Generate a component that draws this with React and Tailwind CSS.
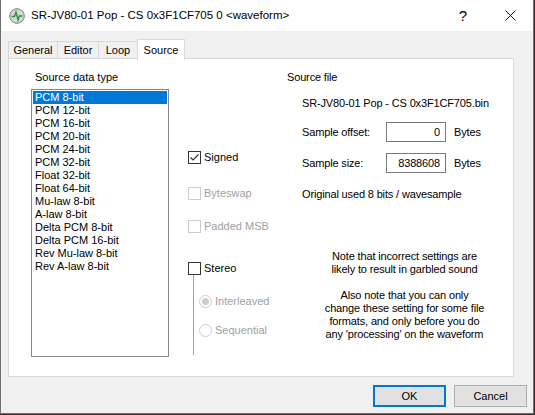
import React from "react";

const items = [
    "PCM 8-bit", "PCM 12-bit", "PCM 16-bit", "PCM 20-bit", "PCM 24-bit", "PCM 32-bit",
    "Float 32-bit", "Float 64-bit", "Mu-law 8-bit", "A-law 8-bit", "Delta PCM 8-bit",
    "Delta PCM 16-bit", "Rev Mu-law 8-bit", "Rev A-law 8-bit",
];

const Check = ({checked, disabled, label}) => (
    <div className="flex items-center h-[13px]">
        <div className={`w-[13px] h-[13px] border bg-white flex items-center justify-center ${disabled ? "border-[#cccccc]" : "border-[#333333]"}`}>
            {checked && (
                <svg width="11" height="11" viewBox="0 0 11 11">
                    <path d="M1.5 5.5 L4 8 L9.5 2.5" fill="none" stroke="#333" strokeWidth="1.2"/>
                </svg>
            )}
        </div>
        <span className={`ml-[3px] ${disabled ? "text-[#a0a0a0]" : "text-black"}`}>{label}</span>
    </div>
);

const Radio = ({checked, label}) => (
    <div className="flex items-center h-[13px]">
        <div className="w-[13px] h-[13px] rounded-full border border-[#cccccc] bg-white flex items-center justify-center">
            {checked && <div className="w-[7px] h-[7px] rounded-full bg-[#cccccc]"/>}
        </div>
        <span className="ml-[3px] text-[#a0a0a0]">{label}</span>
    </div>
);

export default function App() {
    return (
        <div className="w-[535px] h-[415px] bg-[#3a2a2a] overflow-hidden"
             style={{fontFamily: '"Liberation Sans", Arial, sans-serif'}}>
            <div className="w-[534px] h-[414px] border-l border-r border-b border-[#6f6f6f] bg-[#f0f0f0] flex flex-col text-[11px] leading-[13px] text-black">
                {/* title bar */}
                <div className="h-[31px] bg-white flex items-center shrink-0">
                    <svg className="ml-[8px]" width="16" height="16" viewBox="0 0 16 16">
                        <circle cx="8" cy="8" r="7.3" fill="#d6d6d6" stroke="#7d7d7d" strokeWidth="1"/>
                        <path d="M2.5 8.5 H5.5 L7 4 L9 12 L10.3 8 H13.5" fill="none" stroke="#1f9a3a" strokeWidth="1.4"/>
                    </svg>
                    <span className="ml-[6px] text-[11.5px] text-black">SR-JV80-01 Pop - CS 0x3F1CF705 0 &lt;waveform&gt;</span>
                    <span className="ml-auto text-[15px] mr-[38px]">?</span>
                    <svg className="mr-[17px]" width="11" height="11" viewBox="0 0 11 11">
                        <path d="M0.5 0.5 L10.5 10.5 M10.5 0.5 L0.5 10.5" stroke="#111" strokeWidth="1"/>
                    </svg>
                </div>

                {/* tabs */}
                <div className="flex ml-[7px] mt-[7px] h-[20px]">
                    <div className="w-[49px] h-[18px] mt-[3px] border border-b-0 border-r-0 border-[#d9d9d9] flex items-center justify-center">General</div>
                    <div className="w-[41px] h-[18px] mt-[3px] border border-b-0 border-r-0 border-[#d9d9d9] flex items-center justify-center">Editor</div>
                    <div className="w-[40px] h-[18px] mt-[3px] border border-b-0 border-[#d9d9d9] flex items-center justify-center">Loop</div>
                    <div className="w-[48px] h-[21px] -ml-[1px] bg-white border border-b-0 border-[#d9d9d9] flex items-center justify-center relative top-[1px] z-10">Source</div>
                </div>

                {/* panel */}
                <div className="ml-[7px] w-[506px] h-[319px] bg-white border border-[#d9d9d9] flex">
                    <div className="ml-[22px] mt-[12px] flex flex-col">
                        <span className="ml-[4px]">Source data type</span>
                        <div className="mt-[5px] w-[138px] h-[268px] border border-[#828790] p-[1px] flex flex-col">
                            {items.map((it, i) => (
                                <div key={i}
                                     className={`h-[13px] pl-[2px] ${i === 0 ? "bg-[#0078d7] text-white" : "text-black"}`}>
                                    {it}
                                </div>
                            ))}
                        </div>
                    </div>

                    <div className="ml-[19px] mt-[92px] w-[99px] flex flex-col">
                        <Check checked label="Signed"/>
                        <div className="mt-[23px]"><Check disabled label="Byteswap"/></div>
                        <div className="mt-[20px]"><Check disabled label="Padded MSB"/></div>
                        <div className="mt-[29px]"><Check label="Stereo"/></div>
                        <div className="flex">
                            <div className="ml-[5px] w-[1px] h-[80px] bg-[#a0a0a0]"/>
                            <div className="ml-[5px] flex flex-col">
                                <div className="mt-[20px]"><Radio checked label="Interleaved"/></div>
                                <div className="mt-[16px]"><Radio label="Sequential"/></div>
                            </div>
                        </div>
                    </div>

                    <div className="mt-[12px] flex flex-col tracking-[-0.15px]">
                        <span>Source file</span>
                        <div className="ml-[15px] flex flex-col">
                            <span className="mt-[13px]">SR-JV80-01 Pop - CS 0x3F1CF705.bin</span>
                            <div className="mt-[12px] flex items-center h-[20px]">
                                <span className="w-[84px]">Sample offset:</span>
                                <div className="w-[60px] h-[20px] border border-[#7a7a7a] flex items-center justify-end pr-[5px]">0</div>
                                <span className="ml-[8px]">Bytes</span>
                            </div>
                            <div className="mt-[11px] flex items-center h-[20px]">
                                <span className="w-[84px]">Sample size:</span>
                                <div className="w-[60px] h-[20px] border border-[#7a7a7a] flex items-center justify-end pr-[5px]">8388608</div>
                                <span className="ml-[8px]">Bytes</span>
                            </div>
                            <span className="mt-[15px]">Original used 8 bits / wavesample</span>
                            <div className="mt-[49px] w-[205px] text-center flex flex-col">
                                <span>Note that incorrect settings are</span>
                                <span>likely to result in garbled sound</span>
                                <span className="mt-[13px]">Also note that you can only</span>
                                <span>change these setting for some file</span>
                                <span>formats, and only before you do</span>
                                <span>any 'processing' on the waveform</span>
                            </div>
                        </div>
                    </div>
                </div>

                {/* buttons */}
                <div className="flex justify-end mt-[8px] mr-[6px] gap-[8px]">
                    <div className="w-[73px] h-[22px] border-2 border-[#0078d7] bg-[#e1e1e1] flex items-center justify-center">OK</div>
                    <div className="w-[73px] h-[22px] border border-[#adadad] bg-[#e1e1e1] flex items-center justify-center">Cancel</div>
                </div>
            </div>
        </div>
    );
}
